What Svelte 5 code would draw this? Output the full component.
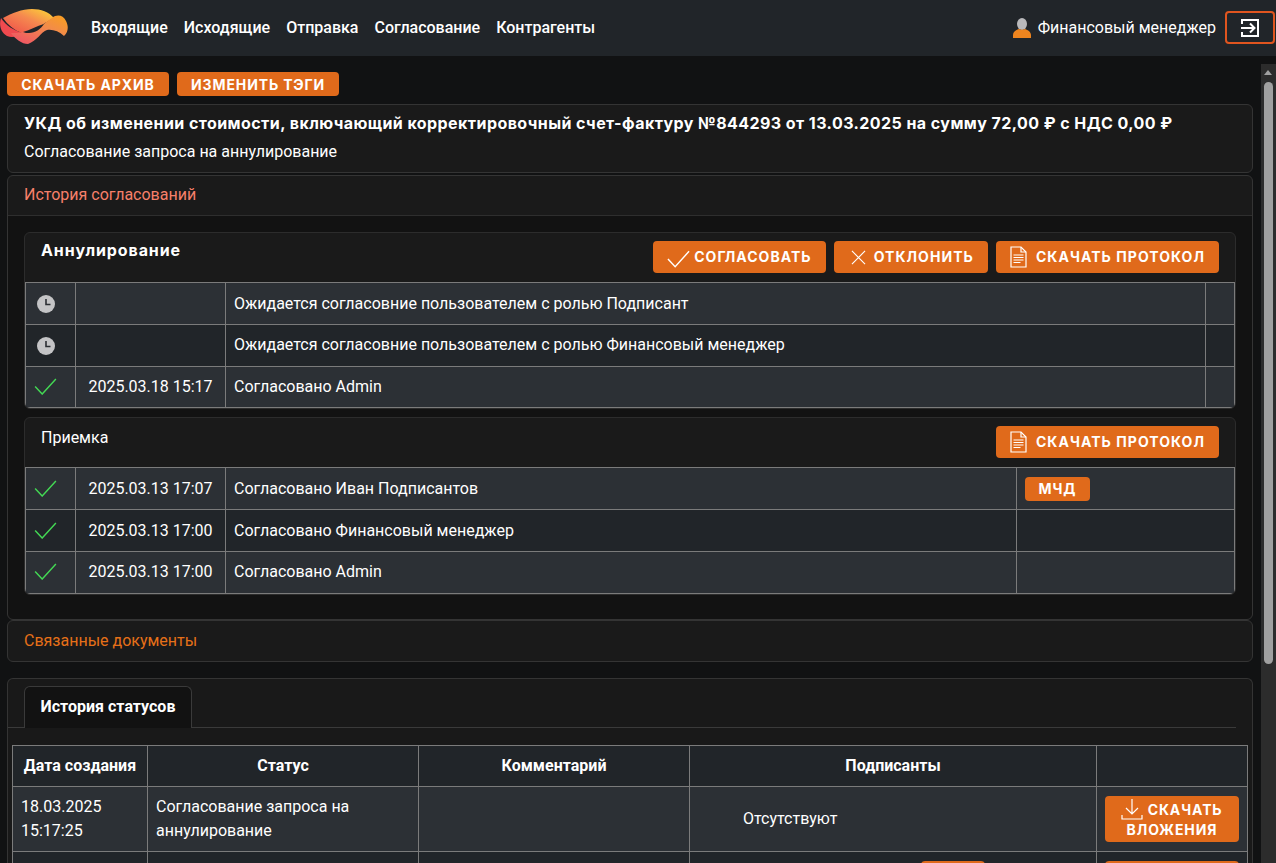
<script>
  const nav = ['Входящие', 'Исходящие', 'Отправка', 'Согласование', 'Контрагенты'];
  const cancelRows = [
    { icon: 'clock', date: '', text: 'Ожидается согласовние пользователем с ролью Подписант' },
    { icon: 'clock', date: '', text: 'Ожидается согласовние пользователем с ролью Финансовый менеджер' },
    { icon: 'check', date: '2025.03.18 15:17', text: 'Согласовано Admin' }
  ];
  const acceptRows = [
    { date: '2025.03.13 17:07', text: 'Согласовано Иван Подписантов', mchd: true },
    { date: '2025.03.13 17:00', text: 'Согласовано Финансовый менеджер' },
    { date: '2025.03.13 17:00', text: 'Согласовано Admin' }
  ];
</script>

{#snippet check(cls)}
  <svg class={cls} viewBox="0 0 24 18" fill="none" stroke="currentColor" stroke-width="1.5"><path d="M1 9l7.500 8L23 1" /></svg>
{/snippet}

{#snippet clock()}
  <svg class="clock" viewBox="0 0 18 18"><circle cx="9" cy="9" r="9" fill="#c4c4c6" /><path d="M9 4v5.500h4.500" fill="none" stroke="#2b2e33" stroke-width="1.6" /></svg>
{/snippet}

{#snippet protocol()}
  <button class="btn big">
    <svg class="ico doc" viewBox="0 0 17 22" fill="none" stroke="#fff" stroke-width="1.2">
      <path d="M1 1h10l5 5v15H1z" /><path d="M11 1v5h5" /><path d="M3.500 9h10M3.500 11.500h10M3.500 14h10M3.500 16.500h7" />
    </svg>
    СКАЧАТЬ ПРОТОКОЛ
  </button>
{/snippet}

<header class="topbar">
  <svg class="logo" viewBox="0 0 68 56">
    <defs>
      <linearGradient id="lg1" x1="0" y1="1" x2="1" y2="0">
        <stop offset="0" stop-color="#ee4a4a" /><stop offset="0.55" stop-color="#f5894f" /><stop offset="1" stop-color="#fddc34" />
      </linearGradient>
      <linearGradient id="lg2" x1="0" y1="1" x2="1" y2="0">
        <stop offset="0" stop-color="#ee4c68" /><stop offset="0.6" stop-color="#f28a4c" /><stop offset="1" stop-color="#f9a11c" />
      </linearGradient>
    </defs>
    <path d="M1 18C-1 24 0 32 7 36c5 2 10 1 15-3C14 30 6 26 1 18z" fill="#ef4a4f" />
    <path d="M3 18C12 13 22 9 32 9c9 0 17 3 22 9-4 2-8 4-12 7-5 4-10 7-20 8C14 30 8 25 3 18z" fill="url(#lg1)" />
    <path d="M11 33c4 0 8 0 12-1L44 24c2-2 5-4 8-6 5-4 11-3 14 3 3 6 2 11-2 15-5-5-12-7-17-6-6 2-10 11-19 14C22 44 15 39 11 33z" fill="url(#lg2)" />
    <path d="M23 32C30 30 37 26 44 24 41 29 35 33 29 33c-2 0-4 0-6-1z" fill="#212529" />
  </svg>
  <nav class="nav">
    {#each nav as item}
      <span>{item}</span>
    {/each}
  </nav>
  <div class="user">
    <svg class="avatar" viewBox="0 0 18 20">
      <ellipse cx="9" cy="6" rx="5" ry="6" fill="#b9b9bb" />
      <path d="M0 20v-3c0-3 3-5 6-6 2 1 4 1 6 0 3 1 6 3 6 6v3z" fill="#ee851f" />
    </svg>
    <span>Финансовый менеджер</span>
  </div>
  <button class="logout" aria-label="Выход">
    <svg viewBox="0 0 18 18" fill="none" stroke="#fff" stroke-width="2">
      <path d="M1 5V1h16v16H1v-4" /><path d="M0 9h13M9 4.500L13.500 9 9 13.500" />
    </svg>
  </button>
</header>

<main class="page">
  <div class="actions">
    <button class="btn small">СКАЧАТЬ АРХИВ</button>
    <button class="btn small">ИЗМЕНИТЬ ТЭГИ</button>
  </div>

  <section class="card doc-head">
    <h1>УКД об изменении стоимости, включающий корректировочный счет-фактуру №844293 от 13.03.2025 на сумму 72,00 ₽ с НДС 0,00 ₽</h1>
    <p>Согласование запроса на аннулирование</p>
  </section>

  <section class="card">
    <div class="acc-title coral">История согласований</div>
    <div class="acc-body">
      <div class="group">
        <div class="group-head">
          <h2>Аннулирование</h2>
          <div class="group-btns">
            <button class="btn big">{@render check('ico ok')} СОГЛАСОВАТЬ</button>
            <button class="btn big">
              <svg class="ico x" viewBox="0 0 16 16" fill="none" stroke="#fff" stroke-width="1.2"><path d="M1 1l14 14M15 1L1 15" /></svg>
              ОТКЛОНИТЬ
            </button>
            {@render protocol()}
          </div>
        </div>
        <div class="rows rows-a">
          {#each cancelRows as row}
            <div class="row">
              <div class="cell icon">
                {#if row.icon === 'clock'}{@render clock()}{:else}{@render check('tick')}{/if}
              </div>
              <div class="cell date">{row.date}</div>
              <div class="cell">{row.text}</div>
              <div class="cell"></div>
            </div>
          {/each}
        </div>
      </div>

      <div class="group">
        <div class="group-head">
          <h3>Приемка</h3>
          <div class="group-btns">{@render protocol()}</div>
        </div>
        <div class="rows rows-b">
          {#each acceptRows as row}
            <div class="row">
              <div class="cell icon">{@render check('tick')}</div>
              <div class="cell date">{row.date}</div>
              <div class="cell">{row.text}</div>
              <div class="cell">
                {#if row.mchd}<button class="btn tiny">МЧД</button>{/if}
              </div>
            </div>
          {/each}
        </div>
      </div>
    </div>
  </section>

  <section class="card linked">
    <div class="acc-title orange">Связанные документы</div>
  </section>

  <section class="card tabs-card">
    <div class="tabs">
      <div class="tab">История статусов</div>
    </div>
    <table class="status">
      <thead>
        <tr>
          <th class="c1">Дата создания</th>
          <th class="c2">Статус</th>
          <th class="c3">Комментарий</th>
          <th class="c4">Подписанты</th>
          <th class="c5"></th>
        </tr>
      </thead>
      <tbody>
        <tr>
          <td>18.03.2025<br />15:17:25</td>
          <td>Согласование запроса на аннулирование</td>
          <td></td>
          <td class="signers">Отсутствуют</td>
          <td class="dl-cell">
            <button class="btn dl">
              <svg class="ico down" viewBox="0 0 22 22" fill="none" stroke="#fff" stroke-width="1.2">
                <path d="M11 1v15M5 10l6 6 6-6M1 17v4h20v-4" />
              </svg>
              СКАЧАТЬ ВЛОЖЕНИЯ
            </button>
          </td>
        </tr>
        <tr class="next">
          <td></td>
          <td></td>
          <td></td>
          <td><button class="btn stub" aria-label="Скачать"></button></td>
          <td class="dl-cell"><button class="btn dl stub2" aria-label="Скачать"></button></td>
        </tr>
      </tbody>
    </table>
  </section>

  <div class="scrollbar">
    <span class="arrow"></span>
    <span class="thumb"></span>
  </div>
</main>

<style>
  :global(html), :global(body) {
    margin: 0;
    height: 100%;
    overflow: hidden;
    background: #111213;
  }
  :global(#app) {
    height: 863px;
    display: flex;
    flex-direction: column;
    color: #fff;
    font-family: Roboto, "Liberation Sans", sans-serif;
    font-size: 16px;
  }

  .topbar {
    flex: none;
    height: 56px;
    box-sizing: border-box;
    background: #212529;
    display: flex;
    align-items: center;
    padding: 0 1px 1px 0;
  }
  .logo {
    width: 68px;
    height: 56px;
    flex: none;
    align-self: flex-start;
  }
  .nav {
    display: flex;
    gap: 16px;
    margin-left: 23px;
    font-weight: 500;
    font-size: 16px;
  }
  .user {
    margin-left: auto;
    display: flex;
    align-items: center;
    gap: 7px;
    font-size: 16px;
  }
  .avatar {
    width: 18px;
    height: 20px;
  }
  .logout {
    margin-left: 9px;
    width: 50px;
    height: 33px;
    box-sizing: border-box;
    background: transparent;
    border: 2px solid #e0551f;
    border-radius: 4px;
    padding: 0;
    display: flex;
    align-items: center;
    justify-content: center;
  }
  .logout svg {
    width: 18px;
    height: 18px;
  }

  .page {
    position: relative;
    flex: 1;
    min-height: 0;
    overflow: hidden;
    box-sizing: border-box;
    padding: 16px 23px 24px 7px;
  }
  .scrollbar {
    position: absolute;
    top: 8px;
    right: 0;
    bottom: 0;
    width: 15px;
    background: #2c2c2c;
  }
  .arrow {
    position: absolute;
    top: 6px;
    left: 3px;
    border-left: 4.500px solid transparent;
    border-right: 4.500px solid transparent;
    border-bottom: 5px solid #a0a0a0;
  }
  .thumb {
    position: absolute;
    top: 18px;
    left: 3px;
    width: 9px;
    height: 582px;
    background: #a0a0a0;
    border-radius: 5px;
  }

  .btn {
    background: #e06a1b;
    color: #fff;
    border: 0;
    border-radius: 4px;
    font-family: Inter, "Open Sans", sans-serif;
    font-weight: 700;
    font-size: 14px;
    letter-spacing: 0.9px;
    display: inline-flex;
    align-items: center;
    justify-content: center;
    padding: 0;
  }
  .actions {
    display: flex;
    gap: 8px;
    height: 24px;
    margin-bottom: 8px;
  }
  .small {
    height: 24px;
    width: 162px;
  }
  .big {
    height: 32px;
    padding: 0 14px 2px;
    gap: 4px;
    letter-spacing: 1.05px;
  }
  .ico {
    color: #fff;
    flex: none;
  }
  :global(svg.ok) { width: 23px; height: 18px; margin-top: 5px; }
  .x { width: 15px; height: 15px; margin: 2px 4px 0 3px; }
  .doc { width: 17px; height: 22px; margin: 2px 5px 0 0; }

  .card {
    background: #1a1a1a;
    border: 1px solid #343434;
    border-radius: 6px;
  }
  .doc-head {
    height: 69px;
    box-sizing: border-box;
    padding: 8px 16px;
  }
  .doc-head h1 {
    margin: 0;
    font-family: Inter, "Open Sans", sans-serif;
    font-weight: 700;
    font-size: 16px;
    letter-spacing: 0.43px;
    line-height: 20px;
    white-space: nowrap;
  }
  .doc-head p {
    margin: 9px 0 0;
    font-size: 16px;
    line-height: 20px;
  }
  .acc-title {
    height: 40px;
    box-sizing: border-box;
    padding: 9px 16px;
    line-height: 20px;
  }
  .coral { color: #f7806a; border-bottom: 1px solid #2e2e2e; }
  .orange { color: #e67018; padding-top: 10px; }
  .acc-body {
    background: #121212;
    padding: 16px 16px 24px;
    border-radius: 0 0 6px 6px;
  }
  .card + .card { margin-top: 2px; }
  .card.linked { margin-top: 0; }
  .card.tabs-card { margin-top: 16px; }

  .group {
    background: #1a1a1a;
    border: 1px solid #2c2c2c;
    border-radius: 6px;
    overflow: hidden;
  }
  .group + .group { margin-top: 8px; }
  .group-head {
    height: 49px;
    box-sizing: border-box;
    display: flex;
    justify-content: space-between;
    padding: 8px 16px;
  }
  .group-head h2 {
    margin: -1px 0 0;
    font-family: Inter, "Open Sans", sans-serif;
    font-size: 16px;
    letter-spacing: 0.9px;
    font-weight: 700;
    line-height: 20px;
  }
  .group-head h3 {
    margin: 0;
    font-weight: 400;
    font-size: 16px;
    line-height: 24px;
  }
  .group-btns {
    display: flex;
    gap: 8px;
  }

  .rows {
    border: 1px solid #7b7b7b;
  }
  .row {
    display: grid;
    height: 42px;
    box-sizing: border-box;
    border-bottom: 1px solid #7b7b7b;
    background: #2c3035;
  }
  .row:nth-child(even) { background: #212529; }
  .row:last-child { border-bottom: 0; }
  .rows-a .row:last-child { height: 40px; }
  .rows-b .row:last-child { height: 41px; }
  .rows-a .row { grid-template-columns: 50px 150px 980px 1fr; }
  .rows-b .row { grid-template-columns: 50px 150px 791px 1fr; }
  .cell {
    display: flex;
    align-items: center;
    padding: 0 8px;
    border-right: 1px solid #7b7b7b;
    min-width: 0;
  }
  .cell:last-child { border-right: 0; }
  .cell.icon { justify-content: center; padding: 0 10px 0 0; }
  .cell.date { justify-content: center; padding: 0; }
  .row:last-child .cell { padding-bottom: 2px; }
  .rows-a .row:nth-child(2) .cell:not(.icon) { padding-bottom: 2px; }
  .clock { width: 18px; height: 18px; }
  :global(svg.tick) {
    width: 23px;
    height: 17px;
    color: #43d854;
  }
  .tiny {
    width: 65px;
    height: 24px;
  }

  .tabs-card {
    padding: 6px 4px 0;
    height: 220px;
    overflow: hidden;
    border-bottom: 0;
    background: #191919;
  }
  .tabs {
    margin: 0 12px 0 -4px;
    padding-left: 16px;
    height: 42px;
    border-bottom: 1px solid #3a3a3a;
    display: flex;
    align-items: flex-end;
  }
  .tab {
    box-sizing: border-box;
    height: 42px;
    margin-bottom: -1px;
    width: 168px;
    padding-bottom: 2px;
    border: 1px solid #3a3a3a;
    border-bottom: 0;
    border-radius: 6px 6px 0 0;
    background: #121212;
    font-weight: 700;
    display: flex;
    align-items: center;
    justify-content: center;
  }
  .status {
    margin: 17px 0 0;
    width: 1235px;
    border-collapse: collapse;
    table-layout: fixed;
    background: #212529;
  }
  .status th, .status td {
    border: 1px solid #7b7b7b;
    padding: 0 8px;
    font-size: 16px;
    line-height: 24px;
  }
  .status th {
    height: 40px;
    font-weight: 700;
    text-align: center;
  }
  .status td { background: #2c3035; height: 64px; }
  .c1 { width: 118px; }
  .c2, .c3 { width: 254px; }
  .c4 { width: 390px; }
  .c5 { width: 134px; }
  .status td.signers { padding-left: 53px; }
  .dl-cell { text-align: center; }
  .dl {
    width: 134px;
    height: 46px;
    display: inline-block;
    line-height: 20px;
    vertical-align: middle;
  }
  .down { width: 22px; height: 22px; vertical-align: -3px; margin-bottom: -2px; }
  .status .next td { background: #212529; height: 40px; vertical-align: top; }
  .stub { width: 64px; height: 20px; margin: 9px 0 0 223px; }
  .stub2 { margin-top: 9px; }
</style>
